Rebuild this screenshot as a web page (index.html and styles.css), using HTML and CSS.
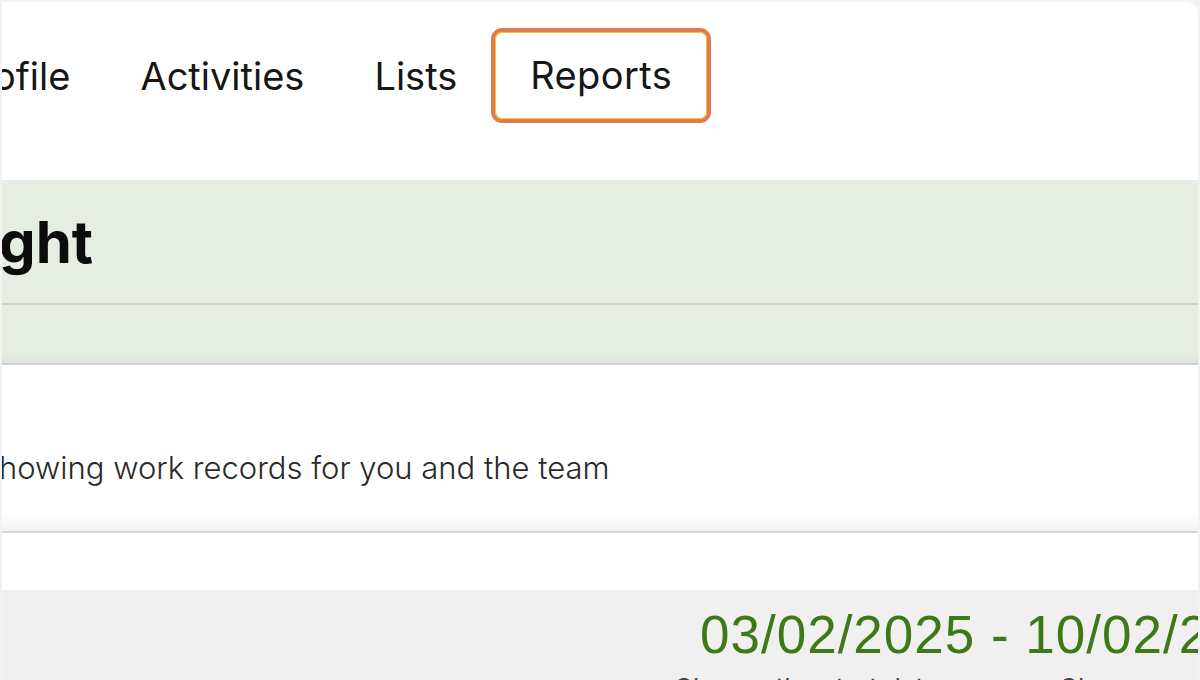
FILE: index.html
```html
<!DOCTYPE html>
<html lang="en">
<head>
<meta charset="utf-8">
<title>Reports</title>
<link rel="stylesheet" href="styles.css">
</head>
<body>
<div class="frame">
  <div class="card">
    <nav class="nav">
      <a class="nav-item nav-first">ofile</a>
      <a class="nav-item">Activities</a>
      <a class="nav-item">Lists</a>
      <a class="nav-item nav-active">Reports</a>
    </nav>
    <section class="band">
      <div class="band-title"><h1 class="title">ght</h1></div>
      <div class="band-sub"></div>
    </section>
    <section class="info">
      <p class="info-text">howing work records for you and the team</p>
    </section>
    <div class="spacer"></div>
    <section class="dates">
      <div class="date-range">03/02/2025 - 10/02/2</div>
      <div class="date-labels">
        <span class="date-label">Choose the start date</span>
        <span class="date-label">Choose</span>
      </div>
    </section>
  </div>
</div>
</body>
</html>
```

FILE: styles.css
```css
html, body {
  margin: 0;
  padding: 0;
  height: 100%;
  overflow: hidden;
}
body {
  background: #f1f1f6;
  font-family: Inter, "Noto Sans", sans-serif;
  color: #111;
}
.frame {
  padding: 2px 2px 0 2px;
  height: 100%;
  box-sizing: border-box;
}
.card {
  background: #ffffff;
  border-radius: 0 12px 0 0;
  overflow: hidden;
  height: 100%;
}
.nav {
  height: 178px;
  box-sizing: border-box;
  padding-bottom: 31px;
  display: flex;
  align-items: center;
  gap: 70px;
  white-space: nowrap;
}
.nav-item {
  font-size: 38px;
  font-weight: 400;
  color: #161616;
  text-decoration: none;
  line-height: 1;
}
.nav-first {
  margin-left: -9px;
}
.nav-active {
  border: 4px solid #e27b4b;
  box-shadow: inset 0 0 0 1px #f2c23c;
  border-radius: 11px;
  padding: 24px 35px 25px 35px;
  margin-left: -36px;
  letter-spacing: 0.4px;
}
.band {
  background: #e6eee3;
}
.band-title {
  height: 123px;
  display: flex;
  align-items: center;
  border-bottom: 2px solid #d3d3d3;
}
.title {
  margin: 0 0 0 -3px;
  font-size: 58px;
  font-weight: 700;
  color: #0c0c0c;
  line-height: 1;
}
.band-sub {
  height: 58px;
  border-bottom: 2px solid #d3d3d3;
  background: linear-gradient(to bottom, #e6eee3 80%, #dfe4dc 100%);
}
.info {
  height: 166px;
  display: flex;
  align-items: flex-end;
  border-bottom: 2px solid #d6d6d6;
  background: linear-gradient(to bottom, #ffffff 90%, #f2f2f2 100%);
}
.info-text {
  margin: 0 0 48px -3px;
  font-size: 31px;
  font-weight: 300;
  color: #2a2a2a;
  line-height: 1;
  white-space: nowrap;
}
.spacer {
  height: 57px;
}
.dates {
  background: #f0f0f0;
  height: 200px;
  display: flex;
  flex-direction: column;
  align-items: flex-start;
}
.date-range {
  font-family: "Liberation Sans", Arial, sans-serif;
  font-size: 53px;
  letter-spacing: 1px;
  color: #3d7a17;
  line-height: 1;
  margin-top: 18px;
  margin-left: 698px;
  white-space: nowrap;
}
.date-labels {
  display: flex;
  gap: 120px;
  margin-left: 672px;
  margin-top: 14px;
  white-space: nowrap;
}
.date-label {
  font-size: 26px;
  color: #444;
  line-height: 1;
}
```
